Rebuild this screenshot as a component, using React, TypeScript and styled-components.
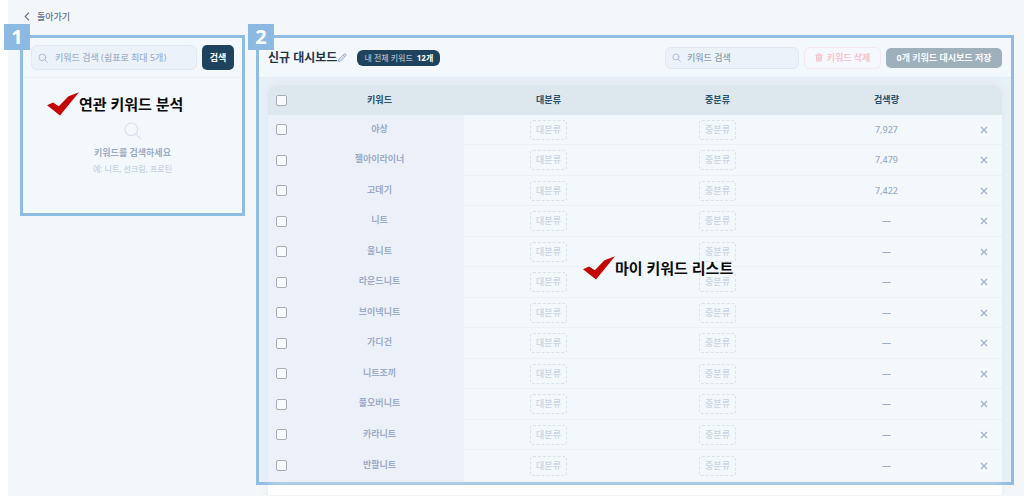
import React from 'react';
import styled, { createGlobalStyle, css } from 'styled-components';

const GlobalStyle = createGlobalStyle`
  * { box-sizing: border-box; }
  body {
    margin: 0;
    background: #ffffff;
    font-family: "Noto Sans", "Noto Sans CJK KR", sans-serif;
    font-size: 9px;
    line-height: 14px;
    color: #23344a;
  }
  button, input { font-family: inherit; }
`;

const Page = styled.div`
  min-height: 100vh;
  margin-left: 8px;
  padding: 0 10px 0 12px;
  background: #f3f7fa;
`;

const TopBar = styled.nav`
  display: flex;
  align-items: center;
  height: 35px;
  padding: 0 0 2px 4px;
`;

const BackLink = styled.a`
  display: flex;
  align-items: center;
  gap: 7px;
  font-weight: 500;
  color: #64748b;
  text-decoration: none;
`;

const Columns = styled.div`
  display: grid;
  grid-template-columns: 225px minmax(0, 1fr);
  align-items: start;
  gap: 11px;
`;

const Frame = styled.section`
  position: relative;
  border: 3px solid #8fbce3;
  background: #f3f8fc;
`;

const Badge = styled.span<{ $left: number }>`
  position: absolute;
  top: -14px;
  left: ${(p) => p.$left}px;
  width: 26px;
  height: 26px;
  background: #8bb9e1;
  color: #ffffff;
  font: 700 20px/26px "Noto Sans", sans-serif;
  text-align: center;
`;

const SearchForm = styled.form`
  display: flex;
  align-items: center;
  gap: 5px;
  height: 40px;
  padding: 0 8px;
  border-bottom: 1px solid #eaf0f6;
`;

const SearchBox = styled.label<{ $width?: number }>`
  display: flex;
  align-items: center;
  flex: ${(p) => (p.$width ? `0 0 ${p.$width}px` : '1')};
  gap: ${(p) => (p.$width ? 6 : 7)}px;
  min-width: 0;
  height: ${(p) => (p.$width ? 22 : 25)}px;
  padding: 0 6px;
  border: 1px solid #dfe8f3;
  border-radius: 6px;
  background: #ebf2f9;
  svg { flex: none; }
`;

const SearchInput = styled.input<{ $tone: string }>`
  flex: 1;
  min-width: 0;
  padding: 0;
  border: 0;
  outline: 0;
  background: transparent;
  font-size: 9px;
  line-height: 14px;
  font-weight: 500;
  color: #23344a;
  &::placeholder { color: ${(p) => p.$tone}; opacity: 1; }
`;

const buttonBase = css`
  display: flex;
  align-items: center;
  justify-content: center;
  flex: none;
  padding: 0;
  font-size: 9px;
  line-height: 14px;
  font-weight: 700;
  white-space: nowrap;
`;

const SearchButton = styled.button`
  ${buttonBase}
  width: 32px;
  height: 25px;
  border: 0;
  border-radius: 5px;
  background: #1f425f;
  color: #ffffff;
`;

const EmptyState = styled.div`
  display: flex;
  flex-direction: column;
  align-items: center;
  height: 135px;
  padding-top: 43px;
  text-align: center;
`;

const EmptyTitle = styled.p`
  margin: 6px 0 0;
  font-weight: 700;
  color: #9bacc8;
`;

const EmptyHint = styled.p`
  margin: 3px 0 0;
  font-size: 8px;
  line-height: 12px;
  font-weight: 500;
  color: #c5d2e2;
`;

const Note = styled.div<{ $top: number; $left: number }>`
  position: absolute;
  top: ${(p) => p.$top}px;
  left: ${(p) => p.$left}px;
  display: flex;
  align-items: center;
  font-size: 15px;
  line-height: 24px;
  font-weight: 700;
  color: #0b0b0b;
  white-space: nowrap;
`;

const Toolbar = styled.header`
  display: flex;
  align-items: center;
  height: 40px;
  padding: 0 9px;
  border-bottom: 1px solid #e4ecf4;
`;

const Title = styled.h1`
  margin: 0;
  font-size: 12px;
  line-height: 20px;
  font-weight: 700;
  white-space: nowrap;
  color: #23344a;
`;

const EditButton = styled.button`
  ${buttonBase}
  width: 10px;
  height: 20px;
  border: 0;
  background: none;
`;

const CountPill = styled.span`
  display: flex;
  align-items: center;
  justify-content: center;
  gap: 4px;
  width: 83px;
  height: 16px;
  margin-left: 10px;
  border-radius: 6px;
  background: #1f425f;
  color: #a9bac8;
  font-size: 8px;
  font-weight: 500;
  white-space: nowrap;
  b { color: #ffffff; }
`;

const Actions = styled.div`
  display: flex;
  align-items: center;
  gap: 5px;
  margin-left: auto;
`;

const DeleteButton = styled.button`
  ${buttonBase}
  gap: 4px;
  width: 77px;
  height: 22px;
  border: 1px solid #f6e8ee;
  border-radius: 6px;
  background: #f5f8fc;
  color: #f5c4ce;
`;

const SaveButton = styled.button`
  ${buttonBase}
  width: 116px;
  height: 20px;
  border: 0;
  border-radius: 5px;
  background: #9fb0bd;
  color: #f8fbfd;
`;

const TableArea = styled.div`
  padding: 7px 9px 0;
  background: #e9f0f7;
`;

const Table = styled.table`
  width: 100%;
  table-layout: fixed;
  border-collapse: separate;
  border-spacing: 0;
  border-radius: 8px 8px 0 0;
  background: #f3f8fc;
  box-shadow: 0 0 8px #dbe5ef;
  text-align: center;
`;

const HeadCell = styled.th<{ $width?: number }>`
  width: ${(p) => (p.$width ? `${p.$width}px` : 'auto')};
  height: 30px;
  padding: 0;
  background: #dce8ee;
  color: #28506c;
  font-weight: 700;
  &:first-child { border-top-left-radius: 8px; }
  &:last-child { border-top-right-radius: 8px; }
`;

const Row = styled.tr`
  height: 30px;
  &:nth-child(even) { height: 31px; }
  &:last-child { height: 32px; }
`;

const Cell = styled.td<{ $tinted?: boolean }>`
  padding: 0;
  border-bottom: 1px solid ${(p) => (p.$tinted ? '#e9eff7' : '#ebf1f7')};
  background: ${(p) => (p.$tinted ? '#ecf1f9' : 'transparent')};
  color: #9bacc8;
  font-weight: 500;
`;

const KeywordCell = styled(Cell)`
  padding-bottom: 2px;
  font-weight: 700;
`;

const RemoveCell = styled(Cell)`
  padding-right: 5px;
`;

const Check = styled.input`
  appearance: none;
  display: block;
  width: 11px;
  height: 11px;
  margin: 0 0 0 8px;
  border: 1px solid #a8adb2;
  border-radius: 2px;
  background: #f8fafc;
`;

const Tag = styled.button`
  ${buttonBase}
  width: 37px;
  height: 20px;
  margin: 0 auto;
  border: 1px dashed #d8e3ec;
  border-radius: 3px;
  background: transparent;
  color: #c6d4e3;
  font-weight: 500;
`;

const RemoveButton = styled.button`
  ${buttonBase}
  width: 12px;
  height: 12px;
  margin: 0 auto;
  border: 0;
  background: none;
`;

const CardEnd = styled.div`
  height: 10px;
  margin: 0 12px;
  background: #ffffff;
  box-shadow: 0 4px 8px #dde6ee;
  clip-path: inset(0 -8px);
`;

const SearchIcon = ({ size, color, stroke = 2 }: { size: number; color: string; stroke?: number }) => (
  <svg width={size} height={size} viewBox="0 0 24 24" fill="none" stroke={color} strokeWidth={stroke} strokeLinecap="round" aria-hidden="true">
    <circle cx="10.5" cy="10.5" r="8" />
    <path d="m16.5 16.5 6 6" />
  </svg>
);

const CheckMark = () => (
  <svg width="32" height="24" viewBox="0 0 32 24" aria-hidden="true">
    <path d="M0 13.200 6 10.400 11.800 14.300 21.500 4.200 32 .3 13 23.500Z" fill="#c40505" />
  </svg>
);

const PencilIcon = () => (
  <svg width="10" height="10" viewBox="0 0 24 24" fill="#dbe3ed" stroke="#a5b3c6" strokeWidth="2.400" strokeLinejoin="round" aria-hidden="true">
    <path d="m3 21 1.500-6L17 2.500a2.500 2.500 0 0 1 4 4L9 19ZM15 5l4 4" />
  </svg>
);

const TrashIcon = () => (
  <svg width="8" height="9" viewBox="0 0 18 20" fill="#f9dde3" stroke="#f5c4ce" strokeWidth="2.400" aria-hidden="true">
    <path d="M1 5h16M6 5V2h6v3M3 5l1 13h10l1-13M7 9v6M11 9v6" />
  </svg>
);

const CloseIcon = () => (
  <svg width="8" height="8" viewBox="0 0 8 8" stroke="#a3b2cb" strokeWidth="1.300" aria-hidden="true">
    <path d="m1 1 6 6M7 1 1 7" />
  </svg>
);

const keywords: { name: string; volume: string }[] = [
  { name: '야상', volume: '7,927' },
  { name: '젤아이라이너', volume: '7,479' },
  { name: '고데기', volume: '7,422' },
  { name: '니트', volume: '—' },
  { name: '울니트', volume: '—' },
  { name: '라운드니트', volume: '—' },
  { name: '브이넥니트', volume: '—' },
  { name: '가디건', volume: '—' },
  { name: '니트조끼', volume: '—' },
  { name: '풀오버니트', volume: '—' },
  { name: '카라니트', volume: '—' },
  { name: '반팔니트', volume: '—' },
];

export default function App() {
  return (
    <>
      <GlobalStyle />
      <Page>
        <TopBar>
          <BackLink href="#">
            <svg width="6" height="9" viewBox="0 0 6 9" fill="none" stroke="#64748b" strokeWidth="1.200" aria-hidden="true">
              <path d="M5 .7 1.200 4.500 5 8.300" />
            </svg>
            돌아가기
          </BackLink>
        </TopBar>
        <Columns>
          <Frame>
            <Badge $left={-19}>1</Badge>
            <SearchForm onSubmit={(e) => e.preventDefault()}>
              <SearchBox>
                <SearchIcon size={10} color="#9eb2d0" />
                <SearchInput $tone="#a0b1cc" aria-label="키워드 검색" placeholder="키워드 검색 (쉼표로 최대 5개)" />
              </SearchBox>
              <SearchButton>검색</SearchButton>
            </SearchForm>
            <EmptyState>
              <SearchIcon size={19} color="#d8e2ef" stroke={1.5} />
              <EmptyTitle>키워드를 검색하세요</EmptyTitle>
              <EmptyHint>예: 니트, 선크림, 프로틴</EmptyHint>
            </EmptyState>
            <Note $top={54} $left={24}><CheckMark />연관 키워드 분석</Note>
          </Frame>
          <div>
            <Frame>
              <Badge $left={-11}>2</Badge>
              <Toolbar>
                <Title>신규 대시보드</Title>
                <EditButton type="button" aria-label="이름 수정"><PencilIcon /></EditButton>
                <CountPill>내 전체 키워드 <b>12개</b></CountPill>
                <Actions>
                  <SearchBox $width={134}>
                    <SearchIcon size={9} color="#9eb2d0" />
                    <SearchInput $tone="#8e9dae" aria-label="목록에서 키워드 검색" placeholder="키워드 검색" />
                  </SearchBox>
                  <DeleteButton type="button"><TrashIcon />키워드 삭제</DeleteButton>
                  <SaveButton type="button">0개 키워드 대시보드 저장</SaveButton>
                </Actions>
              </Toolbar>
              <TableArea>
                <Table>
                  <thead>
                    <tr>
                      <HeadCell $width={27}><Check type="checkbox" aria-label="전체 선택" /></HeadCell>
                      <HeadCell>키워드</HeadCell>
                      <HeadCell>대분류</HeadCell>
                      <HeadCell>중분류</HeadCell>
                      <HeadCell>검색량</HeadCell>
                      <HeadCell $width={31} aria-label="삭제" />
                    </tr>
                  </thead>
                  <tbody>
                    {keywords.map((k) => (
                      <Row key={k.name}>
                        <Cell $tinted><Check type="checkbox" aria-label={k.name} /></Cell>
                        <KeywordCell $tinted>{k.name}</KeywordCell>
                        <Cell><Tag type="button">대분류</Tag></Cell>
                        <Cell><Tag type="button">중분류</Tag></Cell>
                        <Cell>{k.volume}</Cell>
                        <RemoveCell><RemoveButton type="button" aria-label={`${k.name} 삭제`}><CloseIcon /></RemoveButton></RemoveCell>
                      </Row>
                    ))}
                  </tbody>
                </Table>
              </TableArea>
              <Note $top={218} $left={324}><CheckMark />마이 키워드 리스트</Note>
            </Frame>
            <CardEnd />
          </div>
        </Columns>
      </Page>
    </>
  );
}
